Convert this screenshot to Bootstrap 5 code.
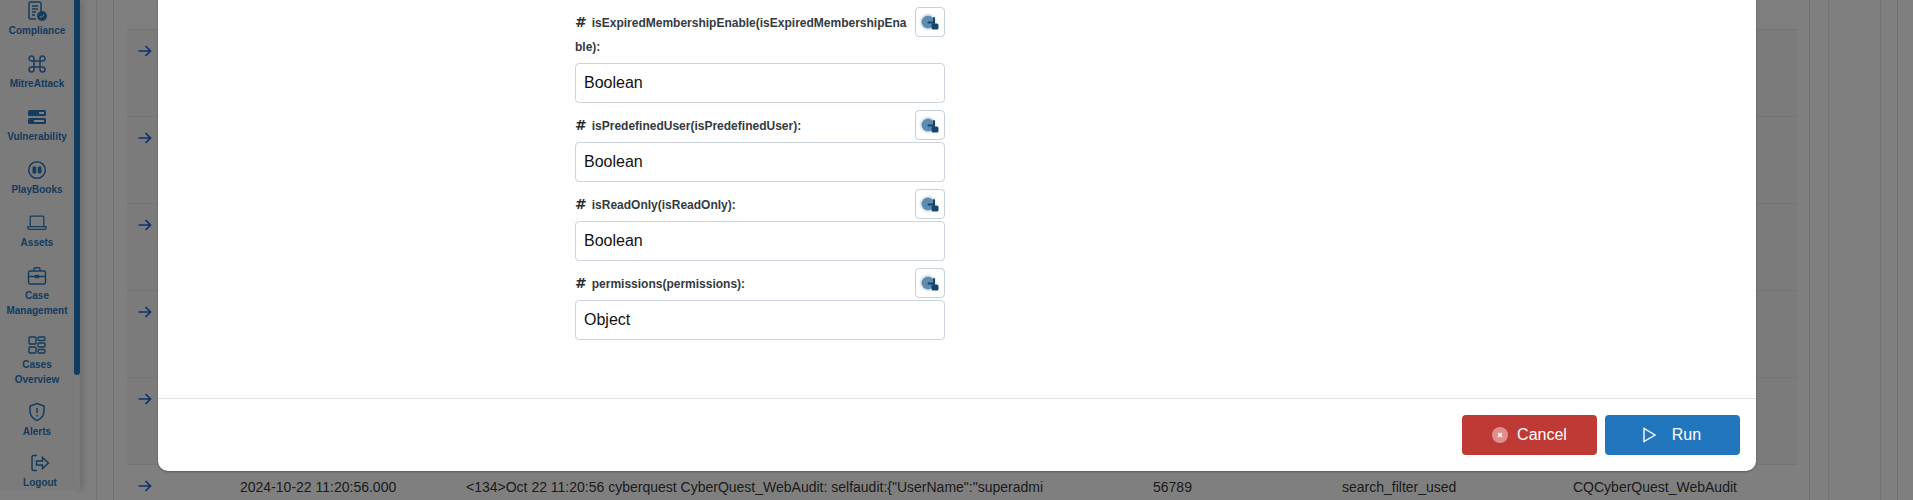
<!DOCTYPE html>
<html lang="en"><head><meta charset="utf-8"><title>Run playbook</title>
<link href="https://cdn.jsdelivr.net/npm/bootstrap@5.3.0/dist/css/bootstrap.min.css" rel="stylesheet">
<style>
html,body{height:500px;overflow:hidden}
body{font-family:"Liberation Sans",Arial,sans-serif;background:#fff;position:relative}
.shell{height:500px;display:flex}
.sidebar{width:74px;height:490px;overflow:hidden;background:#f7f7f7;flex:none}
.side-inner{margin-top:-1px;display:flex;flex-direction:column;align-items:center}
.side-item{display:flex;flex-direction:column;align-items:center;text-align:center;color:#2a78bf;font-weight:700;font-size:10px;line-height:15px;width:74px}
.side-item svg{width:20px;height:20px;display:block;margin:2px 0}
.side-item.s1{height:53px}.side-item.s2{height:69px}.side-item.s3{height:67px}.side-item.s4{height:51px}
.side-item.logout{padding-left:6px}
.thumb-rail{width:6px;height:490px;background:#f7f7f7;box-shadow:3px 0 6px rgba(0,0,0,.18);flex:none}
.thumb{width:6px;height:375px;background:#1f78c4;border-radius:0 0 4px 4px}
.main{flex:1;display:flex;min-width:0}
.rail-a{width:16px}.rail-b{width:17px;border-left:1px solid #e4e4e4}.rail-c{width:14px;border-left:1px solid #e4e4e4}
.rail-end{border-left:1px solid #e4e4e4}
.rail-set{height:500px}
.rail-gap{width:12px}.rail-w19{width:19px}.rail-w52{width:52px}.rail-w17{width:17px}.rail-w16{width:16px}
.tbl{width:1670px;flex:none;padding-top:29px}
.trow{height:87px;background:#f6f6f6;border-top:1px solid #e8e8e8;padding-left:11px;padding-top:14px}
.trow svg{width:14px;height:14px;display:block}
.trow.plain{background:transparent;display:flex;font-size:14px;color:#383838;height:36px;padding-top:12px;white-space:nowrap}
.trow.plain svg{margin-top:2px;flex:none}
.c1{margin-left:88px;width:226px}.c2{width:687px;overflow:hidden;height:18px}.c3{width:189px}.c4{width:231px}
.veil{position:absolute;inset:0;background:#000;opacity:.5}
.modal-shell{position:absolute;left:158px;top:0;width:1598px;height:471px;background:#fff;border-radius:0 0 10px 10px;box-shadow:0 1px 2px rgba(0,0,0,.3);display:flex;flex-direction:column}
.form-area{flex:1;padding:7px 0 0 417px}
.field{width:370px;margin-bottom:7px}
.field-head{display:flex;justify-content:space-between;align-items:flex-start}
.field-label{width:335px;font-size:12px;font-weight:700;line-height:24px;color:#343a40;word-break:break-all;padding:4px 0 4px}
.hash{font-family:"DejaVu Sans",sans-serif;font-size:14px;line-height:1;margin-right:5px;font-weight:700;color:#2b2f33}
.pick{width:30px;height:30px;border:1px solid #c5d0dc;border-radius:4px;background:#fff;padding:0;display:flex;align-items:center;justify-content:center;flex:none}
.pick svg{width:22px;height:22px}
.type-input{height:40px;border:1px solid #ccd3dc;border-radius:4px;font-size:16px;color:#111;padding:0 8px;box-shadow:none}
.foot-bar{height:73px;border-top:1px solid #e2e2ea;display:flex;justify-content:flex-end;align-items:flex-start;gap:8px;padding:16px 16px 0 0}
.act{width:135px;height:40px;border:0;border-radius:4px;color:#fff;font-size:16px;display:flex;align-items:center;justify-content:center;padding:0}
.act-cancel{background:#bf3a34}.act-run{background:#2176bd;padding-right:2px}
.act-cancel:hover{background:#bf3a34;color:#fff}.act-run:hover{background:#2176bd;color:#fff}
.act svg{width:16px;height:16px;margin-right:9px}
.act-run svg{margin-right:14px}
</style></head><body>
<svg width="0" height="0" class="d-block"><defs>
<symbol id="arrow" viewBox="0 0 14 14"><path d="M0.500 7h12M7.500 2l5 5-5 5" fill="none" stroke="#1e62e0" stroke-width="1.700"/></symbol>
<symbol id="pick" viewBox="0 0 22 22"><circle cx="9" cy="11" r="8.500" fill="#e3eaf1"/><circle cx="9" cy="11" r="6.500" fill="#5f8bae"/><path d="M15 7v6M9.500 11.500H14" fill="none" stroke="#12466f" stroke-width="2" stroke-linecap="round"/><rect x="12.500" y="12.500" width="7" height="6" rx="1.500" fill="#12466f"/></symbol>
</defs></svg>
<div class="shell">
 <nav class="sidebar"><div class="side-inner">
  <div class="side-item s1"><svg viewBox="0 0 20 20" fill="none" stroke="#2a78bf" stroke-width="1.500"><path d="M14 11V2.500A1.500 1.500 0 0 0 12.500 1H3.500A1.500 1.500 0 0 0 2 2.500v14A1.500 1.500 0 0 0 3.500 18H9"/><path d="M5 5h6M5 8h6M5 11h4M5 14h3"/><circle cx="15" cy="15" r="5" fill="#2a78bf" stroke="none"/><path d="M12.800 15l1.600 1.600 2.800-3" stroke="#fff" stroke-width="1"/></svg><span>Compliance</span></div>
  <div class="side-item s1"><svg viewBox="0 0 20 20" fill="none" stroke="#2a78bf" stroke-width="1.500"><path d="M7 7h6v6H7zM7 7H4.500A2.500 2.500 0 1 1 7 4.500zM13 7V4.500A2.500 2.500 0 1 1 15.500 7zM13 13h2.500A2.500 2.500 0 1 1 13 15.500zM7 13v2.500A2.500 2.500 0 1 1 4.500 13z"/></svg><span>MitreAttack</span></div>
  <div class="side-item s1"><svg viewBox="0 0 20 20"><rect x="1" y="3" width="18" height="6" rx="1.500" fill="#2a78bf"/><rect x="1" y="11" width="18" height="6" rx="1.500" fill="#2a78bf"/><rect x="12" y="5" width="5" height="2" fill="#fff"/><rect x="7" y="13" width="10" height="2" fill="#fff"/></svg><span>Vulnerability</span></div>
  <div class="side-item s1"><svg viewBox="0 0 20 20"><circle cx="10" cy="10" r="8.300" fill="none" stroke="#2a78bf" stroke-width="1.500"/><rect x="5.500" y="6.500" width="3.800" height="7" rx="1.200" fill="#2a78bf"/><rect x="10.700" y="6.500" width="3.800" height="7" rx="1.200" fill="#2a78bf"/></svg><span>PlayBooks</span></div>
  <div class="side-item s1"><svg viewBox="0 0 22 20" fill="none" stroke="#2a78bf" stroke-width="1.400"><path d="M3.500 13.500V3.500a1 1 0 0 1 1-1h13a1 1 0 0 1 1 1v10"/><path d="M1 14h20v1.500a1.500 1.500 0 0 1-1.500 1.500h-17A1.500 1.500 0 0 1 1 15.500z"/></svg><span>Assets</span></div>
  <div class="side-item s2"><svg viewBox="0 0 20 20" fill="none" stroke="#2a78bf" stroke-width="1.400"><rect x="1.500" y="5" width="17" height="13" rx="1.500"/><path d="M7 5V3a1.200 1.200 0 0 1 1.200-1.200h3.600A1.200 1.200 0 0 1 13 3v2M1.500 10.500h17"/><rect x="8.500" y="9.500" width="3" height="2" fill="#2a78bf"/></svg><span>Case Management</span></div>
  <div class="side-item s3"><svg viewBox="0 0 20 20" fill="none" stroke="#2a78bf" stroke-width="1.400"><rect x="2" y="2" width="7" height="7" rx="1"/><rect x="2" y="12" width="7" height="6" rx="1"/><rect x="11" y="2" width="7" height="3.500" rx="1"/><rect x="11" y="8" width="7" height="4" rx="1"/><rect x="11" y="14.500" width="7" height="3.500" rx="1"/></svg><span>Cases Overview</span></div>
  <div class="side-item s4"><svg viewBox="0 0 20 20" fill="none" stroke="#2a78bf" stroke-width="1.500"><path d="M10 1.500l7 2.500v5c0 4.500-3 7.800-7 9.500-4-1.700-7-5-7-9.500V4z"/><path d="M10 6v5M10 13v1.500"/></svg><span>Alerts</span></div>
  <div class="side-item s1 logout"><svg viewBox="0 0 20 20" fill="none" stroke="#2a78bf" stroke-width="1.500"><path d="M7 2.500H3.500A1.500 1.500 0 0 0 2 4v12a1.500 1.500 0 0 0 1.500 1.500H7"/><path d="M6.500 8h6V4.500L18.500 10l-6 5.500V12h-6z"/></svg><span>Logout</span></div>
 </div></nav>
 <div class="thumb-rail"><div class="thumb"></div></div>
 <div class="main">
  <div class="rail-a"></div><div class="rail-b"></div><div class="rail-c"></div>
  <div class="tbl">
   <div class="trow"><svg><use href="#arrow"/></svg></div>
   <div class="trow"><svg><use href="#arrow"/></svg></div>
   <div class="trow"><svg><use href="#arrow"/></svg></div>
   <div class="trow"><svg><use href="#arrow"/></svg></div>
   <div class="trow"><svg><use href="#arrow"/></svg></div>
   <div class="trow plain"><svg><use href="#arrow"/></svg><span class="c1">2024-10-22 11:20:56.000</span><span class="c2">&lt;134&gt;Oct 22 11:20:56 cyberquest CyberQuest_WebAudit: selfaudit:{"UserName":"superadmi</span><span class="c3">56789</span><span class="c4">search_filter_used</span><span>CQCyberQuest_WebAudit</span></div>
  </div>
  <div class="d-flex ms-auto rail-set"><div class="rail-gap"></div><div class="rail-end rail-w19"></div><div class="rail-end rail-w52"></div><div class="rail-end rail-w17"></div><div class="rail-end rail-w16"></div></div>
 </div>
</div>
<div class="veil"></div>
<div class="modal-shell">
 <div class="form-area">
  <div class="field"><div class="field-head"><div class="field-label"><span class="hash">#</span>isExpiredMembershipEnable(isExpiredMembershipEnable):</div><button class="pick" type="button"><svg><use href="#pick"/></svg></button></div><input class="form-control type-input" value="Boolean"></div>
  <div class="field"><div class="field-head"><div class="field-label"><span class="hash">#</span>isPredefinedUser(isPredefinedUser):</div><button class="pick" type="button"><svg><use href="#pick"/></svg></button></div><input class="form-control type-input" value="Boolean"></div>
  <div class="field"><div class="field-head"><div class="field-label"><span class="hash">#</span>isReadOnly(isReadOnly):</div><button class="pick" type="button"><svg><use href="#pick"/></svg></button></div><input class="form-control type-input" value="Boolean"></div>
  <div class="field"><div class="field-head"><div class="field-label"><span class="hash">#</span>permissions(permissions):</div><button class="pick" type="button"><svg><use href="#pick"/></svg></button></div><input class="form-control type-input" value="Object"></div>
 </div>
 <div class="foot-bar">
  <button class="btn act act-cancel" type="button"><svg viewBox="0 0 16 16"><circle cx="8" cy="8" r="8" fill="#df8f8c"/><path d="M6 6l4 4M10 6l-4 4" stroke="#fff" stroke-width="1.500"/></svg>Cancel</button>
  <button class="btn act act-run" type="button"><svg viewBox="0 0 16 16" fill="none" stroke="#fff" stroke-width="1.400"><path d="M2 1.500v13l11-6.500z"/></svg>Run</button>
 </div>
</div>
<script src="https://cdn.jsdelivr.net/npm/bootstrap@5.3.0/dist/js/bootstrap.bundle.min.js"></script>
</body></html>
